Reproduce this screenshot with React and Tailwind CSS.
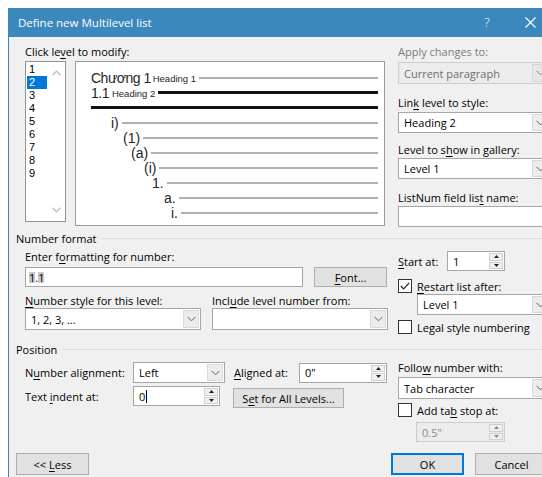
import React from "react";

function U({ children }) {
  return <span className="underline underline-offset-[2px]">{children}</span>;
}

function Chevron({ color = "#606060" }) {
  return (
    <svg width="9" height="6" viewBox="0 0 9 6">
      <path d="M0.5 0.8 L4.5 4.8 L8.5 0.8" fill="none" stroke={color} strokeWidth="1" />
    </svg>
  );
}

function Dropdown({ text, className = "", disabled = false }) {
  return (
    <div
      className={`flex items-stretch border ${
        disabled ? "border-[#cccccc] bg-[#ececec] text-[#6d6d6d]" : "border-[#a6a6a6] bg-white"
      } ${className}`}
    >
      <span className="flex-1 flex items-center pl-[5px] whitespace-nowrap overflow-hidden">{text}</span>
      <div
        className={`w-[16px] m-[1px] flex items-center justify-center border ${
          disabled ? "border-[#d6d6d6] bg-[#e6e6e6]" : "border-[#dadada] bg-[#ececec]"
        }`}
      >
        <Chevron color={disabled ? "#8a8a8a" : "#606060"} />
      </div>
    </div>
  );
}

function SpinArrows({ disabled = false }) {
  const c = disabled ? "#8a8a8a" : "#222222";
  return (
    <div className="w-[14px] m-[1px] flex flex-col gap-[1px]">
      <div className="flex-1 flex items-center justify-center border border-[#d0d0d0] bg-[#f0f0f0]">
        <svg width="5" height="3" viewBox="0 0 5 3">
          <path d="M0 3 L2.5 0 L5 3 Z" fill={c} />
        </svg>
      </div>
      <div className="flex-1 flex items-center justify-center border border-[#d0d0d0] bg-[#f0f0f0]">
        <svg width="5" height="3" viewBox="0 0 5 3">
          <path d="M0 0 L2.5 3 L5 0 Z" fill={c} />
        </svg>
      </div>
    </div>
  );
}

function Spinner({ children, className = "", disabled = false }) {
  return (
    <div
      className={`flex items-stretch border ${
        disabled ? "border-[#cccccc] bg-[#ececec] text-[#8a8a8a]" : "border-[#a6a6a6] bg-white"
      } ${className}`}
    >
      <span className="flex-1 flex items-center pl-[5px] whitespace-nowrap">{children}</span>
      <SpinArrows disabled={disabled} />
    </div>
  );
}

function Checkbox({ checked = false }) {
  return (
    <div className="w-[14px] h-[14px] border border-[#333333] bg-white flex items-center justify-center shrink-0">
      {checked && (
        <svg width="10" height="8" viewBox="0 0 10 8">
          <path d="M0.8 4 L3.6 6.8 L9.2 0.8" fill="none" stroke="#222222" strokeWidth="1.2" />
        </svg>
      )}
    </div>
  );
}

function Button({ children, className = "" }) {
  return (
    <div className={`flex items-center justify-center border border-[#adadad] bg-[#e1e1e1] ${className}`}>
      <span className="whitespace-pre">{children}</span>
    </div>
  );
}

function GroupHeader({ children }) {
  return (
    <div className="h-[16px] flex items-center pl-[7px]">
      <span className="whitespace-nowrap">{children}</span>
      <div className="flex-1 h-px bg-[#dcdcdc] ml-[6px]" />
    </div>
  );
}

function PreviewRow({ indent, children, line = "gray" }) {
  return (
    <div className="h-[15px] flex items-center" style={{ paddingLeft: indent }}>
      {children}
      <div
        className={`flex-1 ml-[3px] ${line === "black" ? "h-[3px] bg-[#111111]" : "h-[2px] bg-[#b0b0b0]"}`}
      />
    </div>
  );
}

function Preview() {
  return (
    <div className="ml-[9px] w-[311px] h-[165px] border border-[#9a9a9a] bg-white pt-[8px] pr-[6px] font-['Liberation_Sans',Arial,sans-serif] text-[#262626]">
      <PreviewRow indent={15}>
        <span className="text-[14px] tracking-[-0.5px] whitespace-nowrap">Chương 1</span>
        <span className="text-[9.5px] ml-[2px] mt-[3px] whitespace-nowrap">Heading 1</span>
      </PreviewRow>
      <PreviewRow indent={15} line="black">
        <span className="text-[14px] tracking-[-0.5px]">1.1</span>
        <span className="text-[9.5px] ml-[3px] mt-[3px] whitespace-nowrap">Heading 2</span>
      </PreviewRow>
      <PreviewRow indent={12} line="black" />
      <PreviewRow indent={35}>
        <span className="text-[14px]">i)</span>
      </PreviewRow>
      <PreviewRow indent={47}>
        <span className="text-[14px]">(1)</span>
      </PreviewRow>
      <PreviewRow indent={55}>
        <span className="text-[14px]">(a)</span>
      </PreviewRow>
      <PreviewRow indent={68}>
        <span className="text-[14px]">(i)</span>
      </PreviewRow>
      <PreviewRow indent={76}>
        <span className="text-[14px]">1.</span>
      </PreviewRow>
      <PreviewRow indent={88}>
        <span className="text-[14px]">a.</span>
      </PreviewRow>
      <PreviewRow indent={95}>
        <span className="text-[14px]">i.</span>
      </PreviewRow>
    </div>
  );
}

function LevelList() {
  const levels = ["1", "2", "3", "4", "5", "6", "7", "8", "9"];
  return (
    <div className="w-[41px] h-[161px] border border-[#939393] bg-white flex">
      <div className="w-[22px] pt-[1px] pl-[1px] font-['Liberation_Sans',Arial,sans-serif] text-[11px]">
        {levels.map((l) => (
          <div
            key={l}
            className={`h-[13px] w-[20px] pl-[2px] leading-[13px] ${
              l === "2" ? "bg-[#0078d7] text-white" : ""
            }`}
          >
            {l}
          </div>
        ))}
      </div>
      <div className="w-[17px] flex flex-col justify-between items-center py-[8px]">
        <svg width="9" height="6" viewBox="0 0 9 6">
          <path d="M0.5 5.2 L4.5 1.2 L8.5 5.2" fill="none" stroke="#c0c0c0" strokeWidth="1.3" />
        </svg>
        <svg width="9" height="6" viewBox="0 0 9 6">
          <path d="M0.5 0.8 L4.5 4.8 L8.5 0.8" fill="none" stroke="#c0c0c0" strokeWidth="1.3" />
        </svg>
      </div>
    </div>
  );
}

export default function App() {
  return (
    <div className="w-[542px] h-[477px] overflow-hidden bg-white pt-[8px] pl-[8px] font-['Open_Sans',sans-serif] text-[11px] text-black leading-none">
      <div className="w-[560px] h-[480px] bg-[#f0f0f0] border-l border-[#3b88bc] flex flex-col">
        {/* Title bar */}
        <div className="h-[29px] bg-[#3b88bc] flex items-center text-white text-[11.5px]">
          <span className="pl-[9px] w-[468px] whitespace-nowrap">Define new Multilevel list</span>
          <span className="w-[20px] text-center text-[13px] font-light">?</span>
          <span className="ml-[23px] w-[20px] flex justify-center">
            <svg width="11" height="11" viewBox="0 0 11 11">
              <path d="M0.5 0.5 L10.5 10.5 M10.5 0.5 L0.5 10.5" stroke="#ffffff" strokeWidth="1.1" />
            </svg>
          </span>
        </div>

        {/* Levels, preview and style links */}
        <div className="h-[193px] pt-[7px] flex">
          <div className="ml-[16px] w-[360px] flex flex-col">
            <div className="h-[16px] leading-[16px]">
              Click le<U>v</U>el to modify:
            </div>
            <div className="flex mt-[1px]">
              <LevelList />
              <Preview />
            </div>
          </div>
          <div className="ml-[13px] w-[152px] flex flex-col">
            <div className="h-[16px] leading-[16px] text-[#7a7a7a]">Apply changes to:</div>
            <Dropdown text="Current paragraph" disabled className="mt-[2px] h-[22px]" />
            <div className="mt-[11px] h-[16px] leading-[16px]">
              Lin<U>k</U> level to style:
            </div>
            <Dropdown text="Heading 2" className="mt-[1px] h-[21px]" />
            <div className="mt-[9px] h-[16px] leading-[16px]">
              Level to s<U>h</U>ow in gallery:
            </div>
            <Dropdown text="Level 1" className="h-[21px]" />
            <div className="mt-[11px] h-[16px] leading-[16px]">
              ListNum field lis<U>t</U> name:
            </div>
            <div className="h-[21px] border border-[#a6a6a6] bg-white" />
          </div>
        </div>

        {/* Number format */}
        <div className="h-[111px] flex flex-col">
          <GroupHeader>Number format</GroupHeader>
          <div className="flex">
            <div className="ml-[16px] w-[363px] flex flex-col">
              <div className="mt-[4px] h-[14px] leading-[14px]">
                Enter f<U>o</U>rmatting for number:
              </div>
              <div className="mt-[3px] flex">
                <div className="w-[278px] h-[20px] border border-[#a6a6a6] bg-white pl-[3px] flex items-center">
                  <span className="bg-[#c8c8c8]">1</span>.<span className="bg-[#c8c8c8]">1</span>
                </div>
                <Button className="ml-[11px] w-[73px] h-[20px]">
                  <U>F</U>ont...
                </Button>
              </div>
              <div className="mt-[7px] h-[14px] leading-[14px] flex">
                <span className="w-[187px]">
                  <U>N</U>umber style for this level:
                </span>
                <span>
                  Incl<U>u</U>de level number from:
                </span>
              </div>
              <div className="flex">
                <Dropdown text="1, 2, 3, ..." className="w-[176px] h-[22px]" />
                <Dropdown text="" className="ml-[11px] w-[176px] h-[22px]" />
              </div>
            </div>
            <div className="ml-[10px] w-[152px] flex flex-col">
              <div className="mt-[5px] h-[20px] flex items-center">
                <span className="w-[49px]">
                  <U>S</U>tart at:
                </span>
                <Spinner className="w-[58px] h-[20px]">1</Spinner>
              </div>
              <div className="mt-[7px] h-[16px] flex items-center">
                <Checkbox checked />
                <span className="ml-[5px]">
                  <U>R</U>estart list after:
                </span>
              </div>
              <Dropdown text="Level 1" className="ml-[19px] h-[21px]" />
              <div className="mt-[4px] h-[16px] flex items-center">
                <Checkbox />
                <span className="ml-[5px]">
                  Le<U>g</U>al style numbering
                </span>
              </div>
            </div>
          </div>
        </div>

        {/* Position */}
        <div className="h-[112px] flex flex-col">
          <GroupHeader>Position</GroupHeader>
          <div className="flex">
            <div className="ml-[16px] w-[363px] flex flex-col">
              <div className="mt-[5px] h-[21px] flex items-center">
                <span className="w-[108px]">
                  N<U>u</U>mber alignment:
                </span>
                <Dropdown text="Left" className="w-[92px] h-[21px]" />
                <span className="ml-[9px] w-[65px]">
                  <U>A</U>ligned at:
                </span>
                <Spinner className="w-[88px] h-[20px]">0"</Spinner>
              </div>
              <div className="mt-[3px] h-[22px] flex items-start">
                <span className="w-[108px] mt-[5px]">
                  Text <U>i</U>ndent at:
                </span>
                <Spinner className="w-[87px] h-[20px]">
                  0<span className="inline-block w-px h-[13px] bg-black ml-[1px]" />
                </Spinner>
                <Button className="ml-[13px] mt-[2px] w-[111px] h-[20px]">
                  S<U>e</U>t for All Levels...
                </Button>
              </div>
            </div>
            <div className="ml-[10px] w-[152px] flex flex-col">
              <div className="mt-[4px] h-[14px] leading-[14px]">
                Follo<U>w</U> number with:
              </div>
              <Dropdown text="Tab character" className="mt-[2px] h-[22px]" />
              <div className="mt-[3px] h-[16px] flex items-center">
                <Checkbox />
                <span className="ml-[5px]">
                  Add ta<U>b</U> stop at:
                </span>
              </div>
              <Spinner disabled className="mt-[4px] ml-[18px] w-[89px] h-[20px]">
                0.5"
              </Spinner>
            </div>
          </div>
        </div>

        {/* Dialog buttons */}
        <div className="h-[22px] flex">
          <Button className="ml-[7px] w-[73px] h-[22px]">
            {"<< "}
            <U>L</U>ess
          </Button>
          <div className="ml-[302px] w-[73px] h-[22px] flex items-center justify-center border-2 border-[#0078d7] bg-[#e1e1e1]">
            OK
          </div>
          <Button className="ml-[11px] w-[73px] h-[22px]">Cancel</Button>
        </div>
      </div>
    </div>
  );
}
